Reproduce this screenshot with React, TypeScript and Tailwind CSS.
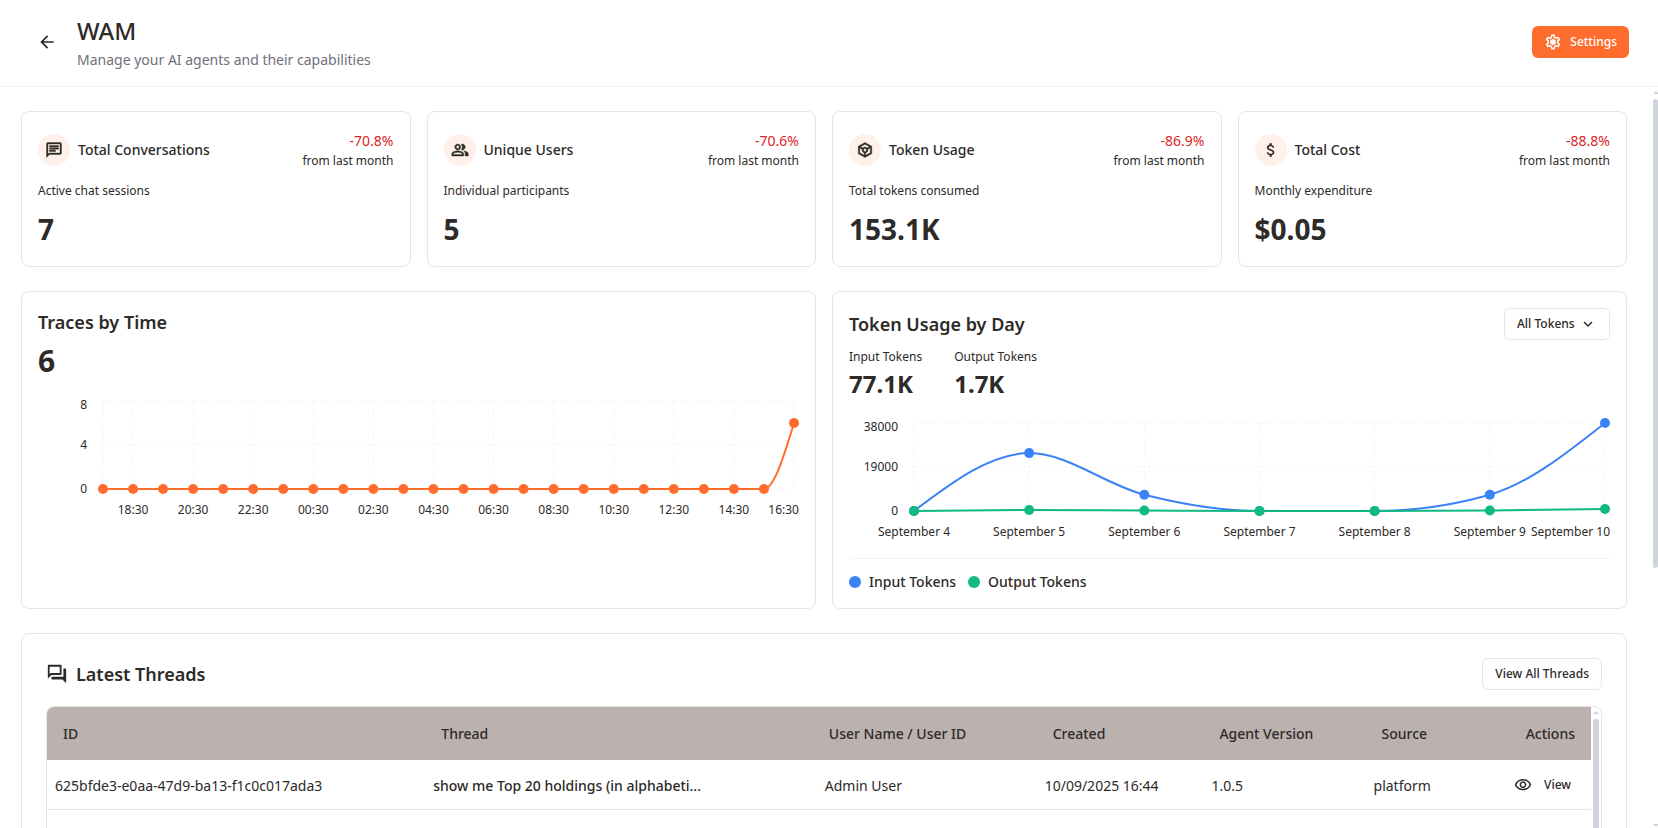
import { useState, type ReactNode } from "react";
import type { IconType } from "react-icons";
import {
  MdArrowBack,
  MdAttachMoney,
  MdKeyboardArrowDown,
  MdOutlineChat,
  MdOutlineForum,
  MdOutlinePeopleAlt,
  MdOutlineSettings,
  MdOutlineToken,
  MdOutlineVisibility,
} from "react-icons/md";

type Stat = { title: string; note: string; value: string; change: string; icon: IconType; thin?: boolean };

const stats: Stat[] = [
  { title: "Total Conversations", note: "Active chat sessions", value: "7", change: "-70.8%", icon: MdOutlineChat },
  { title: "Unique Users", note: "Individual participants", value: "5", change: "-70.6%", icon: MdOutlinePeopleAlt },
  { title: "Token Usage", note: "Total tokens consumed", value: "153.1K", change: "-86.9%", icon: MdOutlineToken },
  { title: "Total Cost", note: "Monthly expenditure", value: "$0.05", change: "-88.8%", icon: MdAttachMoney, thin: true },
];

const hours = Array.from({ length: 24 }, (_, i) => `${String((i + 17) % 24).padStart(2, "0")}:30`);
const traces = hours.map((_, i) => (i === 23 ? 6 : 0));

const days = [4, 5, 6, 7, 8, 9, 10].map((d) => `September ${d}`);
const inputTokens = [0, 25000, 7050, 0, 0, 7050, 38000];
const outputTokens = [0, 430, 200, 0, 0, 220, 850];

const threads = [
  {
    id: "625bfde3-e0aa-47d9-ba13-f1c0c017ada3",
    title: "show me Top 20 holdings (in alphabeti...",
    user: "Admin User",
    created: "10/09/2025 16:44",
    version: "1.0.5",
    source: "platform",
  },
];

// plot area inside the 761 x 128 chart canvas
const LEFT = 65;
const RIGHT = 756;
const TOP = 5;
const BOTTOM = 93;

type Point = [number, number];

// monotone cubic interpolation, so flat stretches stay flat
function smoothPath(pts: Point[]) {
  const n = pts.length;
  const slope = (i: number) => (pts[i + 1][1] - pts[i][1]) / (pts[i + 1][0] - pts[i][0]);
  const t: number[] = [];
  for (let i = 1; i < n - 1; i++) {
    const a = slope(i - 1);
    const b = slope(i);
    t[i] = (Math.sign(a) + Math.sign(b)) * Math.min(Math.abs(a), Math.abs(b), Math.abs(a + b) / 4);
  }
  t[0] = (3 * slope(0) - t[1]) / 2;
  t[n - 1] = (3 * slope(n - 2) - t[n - 2]) / 2;
  let d = `M${pts[0][0]},${pts[0][1]}`;
  for (let i = 0; i < n - 1; i++) {
    const [x0, y0] = pts[i];
    const [x1, y1] = pts[i + 1];
    const dx = (x1 - x0) / 3;
    d += `C${x0 + dx},${y0 + dx * t[i]},${x1 - dx},${y1 - dx * t[i + 1]},${x1},${y1}`;
  }
  return d;
}

type ChartProps = {
  label: string;
  labels: string[];
  max: number;
  series: { values: number[]; color: string }[];
  showTick?: (i: number) => boolean;
};

function LineChart({ label, labels, max, series, showTick = () => true }: ChartProps) {
  const last = labels.length - 1;
  const x = (i: number) => LEFT + (i * (RIGHT - LEFT)) / last;
  const y = (v: number) => BOTTOM - (v / max) * (BOTTOM - TOP);
  const yTicks = [
    { v: max, at: 13 },
    { v: max / 2, at: 53 },
    { v: 0, at: 97 },
  ];
  return (
    <svg viewBox="0 0 761 128" className="mt-4 block w-full" role="img" aria-label={label}>
      <g stroke="#f3f3f4" strokeDasharray="3 3">
        {yTicks.map(({ v }) => (
          <line key={v} x1={LEFT} x2={RIGHT} y1={y(v)} y2={y(v)} />
        ))}
        {labels.map((l, i) => (i === 0 || showTick(i)) && <line key={l} x1={x(i)} x2={x(i)} y1={TOP} y2={BOTTOM} />)}
      </g>
      <g className="fill-[#2d2a28] text-xs">
        {yTicks.map(({ v, at }) => (
          <text key={v} x={49} y={at} textAnchor="end">{v}</text>
        ))}
        {labels.map((l, i) =>
          showTick(i) && (
            <text key={l} x={i === last ? 761 : x(i)} y={118} textAnchor={i === last ? "end" : "middle"}>{l}</text>
          ),
        )}
      </g>
      {series.map(({ values, color }) => (
        <path
          key={color}
          d={smoothPath(values.map((v, i): Point => [x(i), y(v)]))}
          fill="none"
          stroke={color}
          strokeWidth={2}
        />
      ))}
      {series.map(({ values, color }) =>
        values.map((v, i) => <circle key={`${color}-${i}`} cx={x(i)} cy={y(v)} r={5} fill={color} />),
      )}
    </svg>
  );
}

function Card({ className, children }: { className: string; children: ReactNode }) {
  return <section className={`rounded-lg border border-[#e6e6e6] bg-white ${className}`}>{children}</section>;
}

function StatCard({ title, note, value, change, icon: Icon, thin }: Stat) {
  return (
    <Card className="px-4 pt-4 pb-[19px]">
      <div className="flex h-[43px] items-center justify-between">
        <div className="flex items-center gap-2">
          <span className="flex size-8 items-center justify-center rounded-full bg-[#fff0e9]">
            <Icon size={18} className={thin ? "" : "[&>path:not([fill=none])]:[stroke-width:0.5]"} />
          </span>
          <h2 className="text-sm font-medium">{title}</h2>
        </div>
        <div className="text-right">
          <div className="text-sm text-[#dc2626]">{change}</div>
          <div className="mt-0.5 text-xs">from last month</div>
        </div>
      </div>
      <p className="mt-3 text-xs">{note}</p>
      <p className="mt-3 text-[28px] leading-9 font-bold">{value}</p>
    </Card>
  );
}

function GearIcon() {
  return (
    <svg width="18" height="18" viewBox="0 0 24 24" aria-hidden>
      <MdOutlineSettings size={24} />
      <circle cx="12" cy="12" r="3" fill="currentColor" />
    </svg>
  );
}

function Scrollbar({ className, thumb }: { className: string; thumb: string }) {
  return (
    <div aria-hidden className={`flex shrink-0 flex-col items-center overflow-hidden ${className}`}>
      <svg width="6" height="3" viewBox="0 0 6 3" className="mt-1 mb-[5px] shrink-0 fill-[#d0d3dc]">
        <path d="M3 0 6 3H0z" />
      </svg>
      <div className="min-h-0 w-full flex-1">
        <div className={`w-full rounded-full bg-[#d0d3dc] ${thumb}`} />
      </div>
      <svg width="6" height="3" viewBox="0 0 6 3" className="mt-1 mb-[1px] shrink-0 fill-[#d0d3dc]">
        <path d="M0 0H6L3 3z" />
      </svg>
    </div>
  );
}

function Legend({ color, children }: { color: string; children: ReactNode }) {
  return (
    <span className="flex items-center gap-2 text-sm font-medium">
      <span className={`size-3 rounded-full ${color}`} />
      {children}
    </span>
  );
}

export default function App() {
  const [filter, setFilter] = useState("all");
  const series = [
    { key: "input", values: inputTokens, color: "#3b82f6" },
    { key: "output", values: outputTokens, color: "#10b981" },
  ].filter((s) => filter === "all" || filter === s.key);

  return (
    <div className="flex h-screen flex-col overflow-hidden bg-white font-['Noto_Sans',sans-serif] text-[#2d2a28]">
      <header className="flex h-[87px] shrink-0 items-center justify-between border-b border-[#f4f4f5] px-[29px] pb-0.5">
        <div className="flex items-center gap-3">
          <button type="button" aria-label="Back" className="flex size-9 items-center justify-center rounded-md">
            <MdArrowBack size={20} />
          </button>
          <div>
            <h1 className="text-2xl font-medium">WAM</h1>
            <p className="mt-[3px] text-sm text-[#71707a]">Manage your AI agents and their capabilities</p>
          </div>
        </div>
        <button
          type="button"
          className="flex h-8 items-center gap-2 rounded-md bg-[#ff6d2e] px-3 text-xs font-medium text-white"
        >
          <GearIcon />
          Settings
        </button>
      </header>

      <div className="flex min-h-0 flex-1">
        <main className="flex min-w-0 flex-1 flex-col gap-6 overflow-hidden pt-6 pr-[26px] pl-[21px]">
          <div className="grid shrink-0 grid-cols-4 gap-4">
            {stats.map((s) => (
              <StatCard key={s.title} {...s} />
            ))}
          </div>

          <div className="grid shrink-0 grid-cols-2 gap-4">
            <Card className="p-4">
              <h2 className="text-lg leading-7 font-semibold">Traces by Time</h2>
              <p className="mt-1.5 text-3xl leading-[38px] font-bold">6</p>
              <LineChart
                label="Traces by time"
                labels={hours}
                max={8}
                series={[{ values: traces, color: "#ff6d2e" }]}
                showTick={(i) => i % 2 === 1}
              />
            </Card>

            <Card className="p-4">
              <div className="flex items-center justify-between">
                <h2 className="text-lg leading-7 font-semibold">Token Usage by Day</h2>
                <div className="relative">
                  <select
                    aria-label="Token type"
                    value={filter}
                    onChange={(e) => setFilter(e.target.value)}
                    className="block h-8 w-[106px] appearance-none rounded-md border border-[#e8e6e1] bg-white px-3 text-xs font-medium"
                  >
                    <option value="all">All Tokens</option>
                    <option value="input">Input Tokens</option>
                    <option value="output">Output Tokens</option>
                  </select>
                  <MdKeyboardArrowDown
                    size={18}
                    className="pointer-events-none absolute top-[7px] right-[13px]"
                  />
                </div>
              </div>
              <div className="mt-2 flex gap-8">
                <div>
                  <p className="text-xs leading-[18px]">Input Tokens</p>
                  <p className="text-2xl leading-9 font-bold">77.1K</p>
                </div>
                <div>
                  <p className="text-xs leading-[18px]">Output Tokens</p>
                  <p className="text-2xl leading-9 font-bold">1.7K</p>
                </div>
              </div>
              <LineChart label="Token usage by day" labels={days} max={38000} series={series} />
              <div className="mt-3 flex gap-3 border-t border-[#f4f4f5] pt-[13px]">
                <Legend color="bg-[#3b82f6]">Input Tokens</Legend>
                <Legend color="bg-[#10b981]">Output Tokens</Legend>
              </div>
            </Card>
          </div>

          <Card className="shrink-0 p-6">
            <div className="flex items-center justify-between">
              <h2 className="flex items-center gap-2 text-lg leading-7 font-semibold">
                <MdOutlineForum size={22} />
                Latest Threads
              </h2>
              <button type="button" className="h-8 rounded-md border border-[#e8e6e1] px-3 text-xs font-medium">
                View All Threads
              </button>
            </div>
            <div className="mt-4 flex h-96 overflow-hidden rounded-lg border border-[#e6e6e6]">
              <div className="min-w-0 flex-1">
                <table className="w-full table-fixed text-left text-sm">
                  <thead className="bg-[#bbb2b0]">
                    <tr className="h-[53px]">
                      <th className="w-[24.5%] px-4 font-medium">ID</th>
                      <th className="w-[25.1%] px-4 font-medium">Thread</th>
                      <th className="w-[14.5%] px-4 font-medium">User Name / User ID</th>
                      <th className="w-[10.8%] px-4 font-medium">Created</th>
                      <th className="w-[10.5%] px-4 font-medium">Agent Version</th>
                      <th className="px-4 font-medium">
                        <div className="flex justify-between">
                          <span>Source</span>
                          <span>Actions</span>
                        </div>
                      </th>
                    </tr>
                  </thead>
                  <tbody>
                    {threads.map((t) => (
                      <tr key={t.id} className="h-[49px] border-b border-[#e6e6e6]">
                        <td className="px-2 pt-[3px]">{t.id}</td>
                        <td className="px-2 pt-[3px] font-medium">{t.title}</td>
                        <td className="px-3 pt-[3px]">{t.user}</td>
                        <td className="px-2 pt-[3px]">{t.created}</td>
                        <td className="px-2 pt-[3px]">{t.version}</td>
                        <td className="px-2 pt-0.5">
                          <div className="flex items-center justify-between">
                            <span className="pt-px">{t.source}</span>
                            <button type="button" className="flex h-8 items-center gap-3 px-3 text-xs font-medium">
                              <MdOutlineVisibility size={18} />
                              View
                            </button>
                          </div>
                        </td>
                      </tr>
                    ))}
                  </tbody>
                </table>
              </div>
              <Scrollbar className="w-[10px] px-0.5" thumb="h-4/5" />
            </div>
          </Card>
        </main>
        <Scrollbar className="w-[5px]" thumb="h-[65%]" />
      </div>
    </div>
  );
}
